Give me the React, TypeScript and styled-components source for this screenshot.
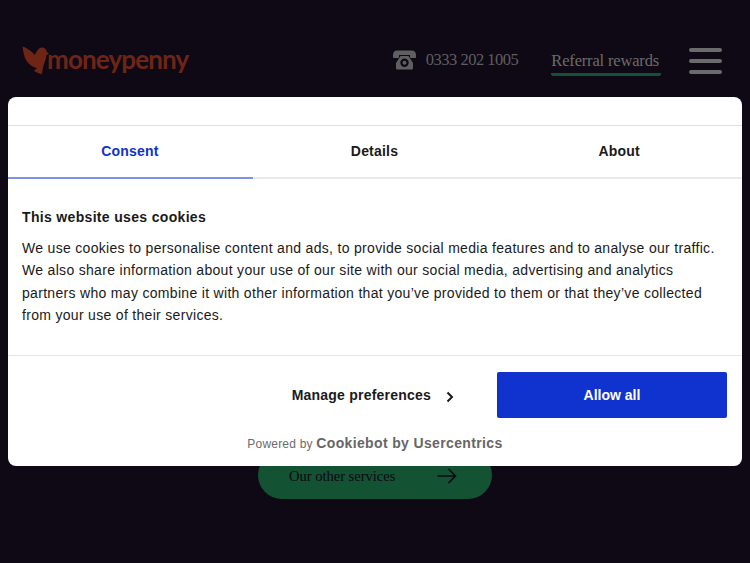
import React from "react";
import styled, { createGlobalStyle } from "styled-components";

const Global = createGlobalStyle`
  html, body { margin: 0; padding: 0; background: #0e0914; }
  * { box-sizing: border-box; }
`;

const Page = styled.div`
  position: relative;
  width: 750px;
  height: 563px;
  overflow: hidden;
  background: #0e0914;
  display: flex;
  flex-direction: column;
  align-items: center;
`;

const Header = styled.header`
  width: 100%;
  height: 120px;
  padding: 44px 28px 0 22px;
  display: flex;
  align-items: flex-start;
  justify-content: space-between;
`;

const Logo = styled.div`
  display: flex;
  align-items: center;
  height: 32px;
  color: #6f2516;
  font: 700 26px/32px "Lato", sans-serif;
  letter-spacing: -0.85px;
`;

const LogoText = styled.span`
  margin-left: -3px;
  margin-top: -2px;
`;

const Nav = styled.nav`
  display: flex;
  align-items: flex-start;
`;

const PhoneLink = styled.div`
  display: flex;
  align-items: center;
  height: 32px;
  gap: 10px;
  color: #5f5f60;
  font: 400 16.5px/34px "Liberation Serif", serif;
  letter-spacing: -0.5px;
  margin-right: 33px;
`;

const RewardLink = styled.div`
  height: 32px;
  padding-right: 2px;
  color: #6b6c6c;
  font: 400 16.5px/34px "Liberation Serif", serif;
  letter-spacing: -0.17px;
  border-bottom: 3px solid #125238;
  border-radius: 2px;
  margin-right: 28px;
`;

const Burger = styled.div`
  width: 33px;
  padding-top: 4px;
  display: flex;
  flex-direction: column;
  gap: 7px;
`;

const BurgerLine = styled.span`
  height: 4px;
  border-radius: 2px;
  background: #6b6b6b;
`;

const ServicesButton = styled.div`
  margin-top: 331px;
  width: 234px;
  height: 48px;
  border-radius: 24px;
  background: #135232;
  display: flex;
  align-items: center;
  justify-content: space-between;
  padding: 2px 35px 0 31px;
  color: #0e0914;
  font: 400 14.5px/18px "Liberation Serif", serif;
  flex: none;
`;

const Dialog = styled.section`
  position: absolute;
  left: 8px;
  top: 97px;
  width: 734px;
  height: 369px;
  border-radius: 8px;
  background: #fff;
  color: #1a1a1a;
  font-family: "Liberation Sans", Arial, sans-serif;
  display: flex;
  flex-direction: column;
`;

const TopGap = styled.div`
  height: 29px;
  border-bottom: 1px solid #dfdfe1;
  flex: none;
`;

const Tabs = styled.div`
  display: grid;
  grid-template-columns: repeat(3, 1fr);
  height: 53px;
  flex: none;
`;

const Tab = styled.div<{ $active?: boolean }>`
  display: flex;
  align-items: center;
  justify-content: center;
  font-size: 14px;
  font-weight: 700;
  letter-spacing: 0.2px;
  padding: 0 1px 2px 0;
  color: ${(p) => (p.$active ? "#1032cf" : "#1a1a1a")};
  border-bottom: 2px solid ${(p) => (p.$active ? "#7e92e6" : "#eaeaec")};
`;

const Body = styled.div`
  height: 177px;
  flex: none;
  padding: 29px 14px 0;
  border-bottom: 1px solid #e6e6e8;
`;

const Title = styled.h2`
  margin: 0 0 11px;
  font-size: 14px;
  line-height: 18px;
  font-weight: 700;
  letter-spacing: 0.33px;
`;

const Copy = styled.p`
  margin: 0;
  font-size: 14px;
  line-height: 22.4px;
  letter-spacing: 0.31px;
  white-space: nowrap;
`;

const Actions = styled.div`
  display: flex;
  justify-content: flex-end;
  align-items: center;
  padding: 16px 15px 0 0;
`;

const Manage = styled.div`
  display: flex;
  align-items: center;
  font-size: 14px;
  font-weight: 700;
  letter-spacing: 0.22px;
  margin-right: 42px;
`;

const ManageIcon = styled.svg`
  width: 10px;
  height: 12px;
  margin-left: 14px;
  margin-top: 3px;
`;

const AllowButton = styled.button`
  width: 230px;
  height: 46px;
  border: 0;
  border-radius: 2px;
  background: #1032cf;
  color: #fff;
  font-family: inherit;
  font-size: 14px;
  font-weight: 700;
  letter-spacing: 0;
`;

const Powered = styled.div`
  margin-top: 16px;
  text-align: center;
  font-size: 12px;
  line-height: 18px;
  color: #6b6b6b;
  letter-spacing: 0.2px;
`;

const Brand = styled.span`
  font-size: 14px;
  font-weight: 700;
  letter-spacing: 0.36px;
  color: #666;
`;

export default function App() {
  return (
    <Page>
      <Global />
      <Header>
        <Logo>
          <svg width="28" height="30" viewBox="0 0 28 30" style={{ flex: "none" }}>
            <path
              fill="#6f2516"
              d="M0.5 1.5 C5 3 9 5.5 13 10 C14.5 6 17 2.5 20 2.5 C23 2.5 24.5 5 25 7 L27 9 L24.5 10 C24 14 23 16 22 19 C21 22 20.5 25 20 29 C18 29 15 28 12 26 L15 23 C10 22 5 18 3 13 C1.5 9 1 5 0.5 1.5 Z"
            />
          </svg>
          <LogoText>moneypenny</LogoText>
        </Logo>
        <Nav>
          <PhoneLink>
            <svg width="23" height="20" viewBox="0 0 23 20">
              <path
                fill="#5f5f60"
                fillRule="evenodd"
                d="M4 0.5 H19 C21.5 0.5 23 2.5 23 5 V7 C23 7.6 22.6 8 22 8 H18 C17.4 8 17 7.6 17 7 V5 H6 V7 C6 7.6 5.6 8 5 8 H1 C0.4 8 0 7.6 0 7 V5 C0 2.5 1.5 0.5 4 0.5 Z M7.5 6 H15.5 L20 13 V18 C20 19 19.4 19.5 18.5 19.5 H4.5 C3.6 19.5 3 19 3 18 V13 Z M11.5 8.5 A4.2 4.2 0 1 0 11.5 16.9 A4.2 4.2 0 1 0 11.5 8.5 Z M11.5 10.7 A2 2 0 1 1 11.5 14.7 A2 2 0 1 1 11.5 10.7 Z"
              />
            </svg>
            0333 202 1005
          </PhoneLink>
          <RewardLink>Referral rewards</RewardLink>
          <Burger>
            <BurgerLine />
            <BurgerLine />
            <BurgerLine />
          </Burger>
        </Nav>
      </Header>
      <ServicesButton>
        Our other services
        <svg width="20" height="16" viewBox="0 0 20 16" fill="none" stroke="#0e0914" strokeWidth="1.6">
          <path d="M0.5 8 H18.5 M11.5 1 L18.5 8 L11.5 15" />
        </svg>
      </ServicesButton>
      <Dialog>
        <TopGap />
        <Tabs>
          <Tab $active>Consent</Tab>
          <Tab>Details</Tab>
          <Tab>About</Tab>
        </Tabs>
        <Body>
          <Title>This website uses cookies</Title>
          <Copy>
            We use cookies to personalise content and ads, to provide social media features and to analyse our traffic.
            <br />
            We also share information about your use of our site with our social media, advertising and analytics
            <br />
            partners who may combine it with other information that you’ve provided to them or that they’ve collected
            <br />
            from your use of their services.
          </Copy>
        </Body>
        <Actions>
          <Manage>
            Manage preferences
            <ManageIcon viewBox="0 0 10 12" fill="none" stroke="#1a1a1a" strokeWidth="2">
              <path d="M2.5 1.5 L7 6 L2.5 10.5" />
            </ManageIcon>
          </Manage>
          <AllowButton>Allow all</AllowButton>
        </Actions>
        <Powered>
          Powered by <Brand>Cookiebot by Usercentrics</Brand>
        </Powered>
      </Dialog>
    </Page>
  );
}
